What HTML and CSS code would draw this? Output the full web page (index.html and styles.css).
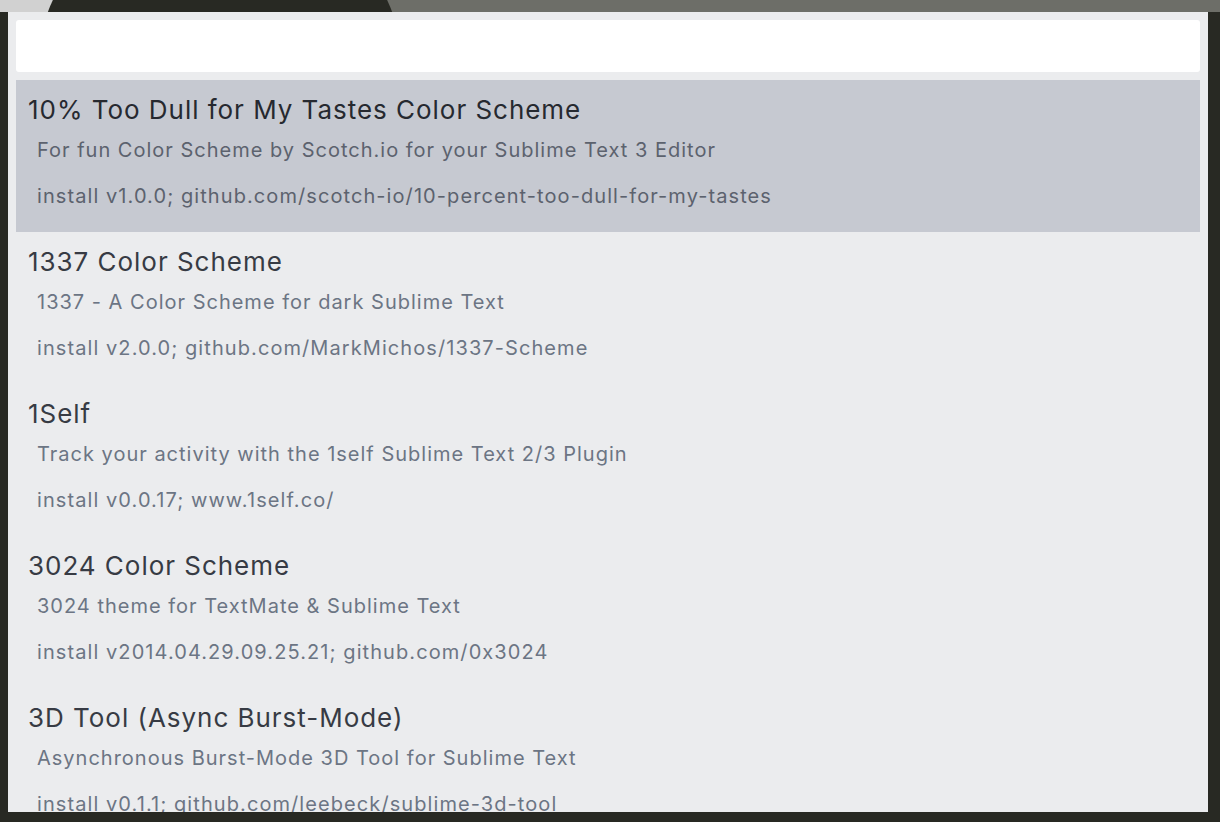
FILE: index.html
```html
<!DOCTYPE html>
<html>
<head>
<meta charset="utf-8">
<link rel="stylesheet" href="styles.css">
</head>
<body>
<div class="topbar"><div class="blob"></div></div>
<div class="panel">
  <div class="search"></div>
  <div class="list">
    <div class="item selected">
      <div class="title">10% Too Dull for My Tastes Color Scheme</div>
      <div class="desc">For fun Color Scheme by Scotch.io for your Sublime Text 3 Editor</div>
      <div class="meta">install v1.0.0; github.com/scotch-io/10-percent-too-dull-for-my-tastes</div>
    </div>
    <div class="item">
      <div class="title">1337 Color Scheme</div>
      <div class="desc">1337 - A Color Scheme for dark Sublime Text</div>
      <div class="meta">install v2.0.0; github.com/MarkMichos/1337-Scheme</div>
    </div>
    <div class="item">
      <div class="title">1Self</div>
      <div class="desc">Track your activity with the 1self Sublime Text 2/3 Plugin</div>
      <div class="meta">install v0.0.17; www.1self.co/</div>
    </div>
    <div class="item">
      <div class="title">3024 Color Scheme</div>
      <div class="desc">3024 theme for TextMate &amp; Sublime Text</div>
      <div class="meta">install v2014.04.29.09.25.21; github.com/0x3024</div>
    </div>
    <div class="item">
      <div class="title">3D Tool (Async Burst-Mode)</div>
      <div class="desc">Asynchronous Burst-Mode 3D Tool for Sublime Text</div>
      <div class="meta">install v0.1.1; github.com/leebeck/sublime-3d-tool</div>
    </div>
  </div>
</div>
</body>
</html>
```

FILE: styles.css
```css
html, body {
  margin: 0;
  padding: 0;
}
body {
  background: #282923;
  width: 1220px;
  height: 822px;
  overflow: hidden;
  font-family: "Inter", "Helvetica Neue", Arial, sans-serif;
}
.topbar {
  position: relative;
  height: 12px;
  overflow: hidden;
  background: linear-gradient(to right, #d1d1d1 0, #d1d1d1 220px, #6d6e68 220px);
}
.blob {
  position: absolute;
  left: 36px;
  top: -107px;
  width: 368px;
  height: 368px;
  border-radius: 50%;
  background: #282923;
}
.panel {
  margin-left: 8px;
  width: 1200px;
  height: 800px;
  box-sizing: border-box;
  padding: 8px;
  background: #ebecee;
  overflow: hidden;
}
.search {
  height: 52px;
  background: #ffffff;
  border-radius: 3px;
}
.list {
  margin-top: 8px;
}
.item {
  height: 152px;
  box-sizing: border-box;
  padding: 14px 0 0 12px;
}
.item.selected {
  background: #c6c9d1;
}
.title {
  font-size: 26px;
  line-height: 32px;
  color: #373b44;
  letter-spacing: 0.97px;
}
.selected .title {
  color: #262930;
}
.desc, .meta {
  padding-left: 9px;
  font-size: 20px;
  color: #6c7584;
  letter-spacing: 1px;
}
.meta {
  letter-spacing: 1.08px;
}
.desc {
  line-height: 28px;
  margin-top: 10px;
}
.meta {
  line-height: 28px;
  margin-top: 18px;
}
.selected .desc, .selected .meta {
  color: #5c626e;
}
```
